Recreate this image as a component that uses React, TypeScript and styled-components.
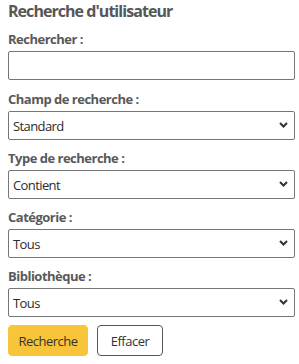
import styled, { createGlobalStyle } from "styled-components";

const GlobalStyle = createGlobalStyle`
  body {
    margin: 0;
    background: #ffffff;
    font-family: "Open Sans", "Noto Sans", sans-serif;
  }
`;

const Panel = styled.form`
  width: 287px;
  padding: 0 0 0 8px;
`;

const Title = styled.h2`
  margin: 0 0 9px;
  font-size: 16px;
  line-height: 22px;
  font-weight: 700;
  color: #575757;
  letter-spacing: -0.95px;
`;

const Field = styled.div<{ $space?: number }>`
  display: flex;
  flex-direction: column;
  gap: 4px;
  margin-bottom: ${({ $space }) => $space ?? 10}px;
`;

const Label = styled.label`
  font-size: 13px;
  line-height: 16px;
  font-weight: 700;
  color: #595959;
  letter-spacing: -0.5px;
`;

const TextInput = styled.input`
  box-sizing: border-box;
  height: 29px;
  width: 100%;
  border: 1px solid #767676;
  border-radius: 2px;
  padding: 0 6px;
  font: inherit;
  font-size: 13px;
`;

const SelectWrap = styled.div`
  position: relative;
  height: 29px;
`;

const Select = styled.select`
  appearance: none;
  box-sizing: border-box;
  width: 100%;
  height: 29px;
  border: 1px solid #767676;
  border-radius: 2px;
  background: #fff;
  padding: 0 24px 0 4px;
  font-family: inherit;
  font-size: 13px;
  color: #2b2b2b;
  letter-spacing: -0.6px;
`;

const Chevron = styled.svg`
  position: absolute;
  right: 7px;
  top: 11px;
  pointer-events: none;
`;

const Actions = styled.div`
  display: flex;
  gap: 9px;
  margin-top: -2px;
`;

const Button = styled.button<{ $primary?: boolean }>`
  box-sizing: border-box;
  height: 31px;
  padding: 0;
  border-radius: 4px;
  font-family: inherit;
  font-size: 13px;
  letter-spacing: -0.5px;
  color: #333;
  background: ${({ $primary }) => ($primary ? "#f8c53a" : "#fff")};
  border: ${({ $primary }) => ($primary ? "1px solid #f8c53a" : "1px solid #555")};
  width: ${({ $primary }) => ($primary ? "80px" : "66px")};
`;

const DropField = ({ label, value }: { label: string; value: string }) => (
  <Field>
    <Label>{label}</Label>
    <SelectWrap>
      <Select defaultValue={value}>
        <option>{value}</option>
      </Select>
      <Chevron width="9" height="6" viewBox="0 0 9 6">
        <path d="M1 1l3.5 3.5L8 1" fill="none" stroke="#333" strokeWidth="2" />
      </Chevron>
    </SelectWrap>
  </Field>
);

export default function App() {
  return (
    <>
      <GlobalStyle />
      <Panel>
        <Title>Recherche d'utilisateur</Title>
        <Field $space={11}>
          <Label>Rechercher :</Label>
          <TextInput type="text" />
        </Field>
        <DropField label="Champ de recherche :" value="Standard" />
        <DropField label="Type de recherche :" value="Contient" />
        <DropField label="Catégorie :" value="Tous" />
        <DropField label="Bibliothèque :" value="Tous" />
        <Actions>
          <Button type="button" $primary>Recherche</Button>
          <Button type="button">Effacer</Button>
        </Actions>
      </Panel>
    </>
  );
}
